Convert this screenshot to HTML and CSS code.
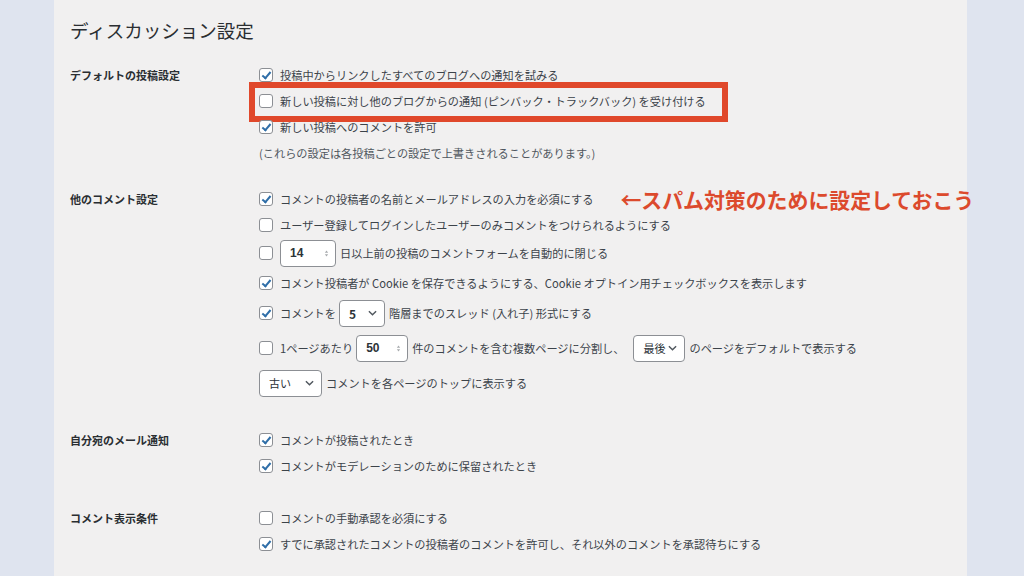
FILE: index.html
```html
<!DOCTYPE html>
<html lang="ja">
<head>
<meta charset="utf-8">
<title>ディスカッション設定</title>
<link rel="stylesheet" href="styles.css">
</head>
<body>
<div class="page">
  <h1 class="title">ディスカッション設定</h1>

  <div class="section s1">
    <div class="label">デフォルトの投稿設定</div>
    <div class="field">
      <div class="line"><span class="cb on"></span><span>投稿中からリンクしたすべてのブログへの通知を試みる</span></div>
      <div class="line highlight"><span class="cb"></span><span>新しい投稿に対し他のブログからの通知 (ピンバック・トラックバック) を受け付ける</span></div>
      <div class="line"><span class="cb on"></span><span>新しい投稿へのコメントを許可</span></div>
      <div class="line note">(これらの設定は各投稿ごとの設定で上書きされることがあります。)</div>
    </div>
  </div>

  <div class="section s2">
    <div class="label">他のコメント設定</div>
    <div class="field">
      <div class="line"><span class="cb on"></span><span>コメントの投稿者の名前とメールアドレスの入力を必須にする</span><span class="annot">←スパム対策のために設定しておこう</span></div>
      <div class="line"><span class="cb"></span><span>ユーザー登録してログインしたユーザーのみコメントをつけられるようにする</span></div>
      <div class="line h30"><span class="cb"></span><span class="num w56 tight">14<svg class="spin" viewBox="0 0 6 10"><path d="M1 4 L3 1.5 L5 4 Z M1 6 L3 8.5 L5 6 Z"/></svg></span><span>日以上前の投稿のコメントフォームを自動的に閉じる</span></div>
      <div class="line h30"><span class="cb on"></span><span>コメント投稿者が Cookie を保存できるようにする、Cookie オプトイン用チェックボックスを表示します</span></div>
      <div class="line h30"><span class="cb on"></span><span>コメントを</span><span class="sel w46">5<svg class="chev" viewBox="0 0 10 6"><polyline points="1,1 5,5 9,1"/></svg></span><span>階層までのスレッド (入れ子) 形式にする</span></div>
      <div class="line h40"><span class="cb"></span><span>1ページあたり</span><span class="num w52">50<svg class="spin" viewBox="0 0 6 10"><path d="M1 4 L3 1.5 L5 4 Z M1 6 L3 8.5 L5 6 Z"/></svg></span><span>件のコメントを含む複数ページに分割し、</span><span class="sel w52 gap-l">最後<svg class="chev" viewBox="0 0 10 6"><polyline points="1,1 5,5 9,1"/></svg></span><span>のページをデフォルトで表示する</span></div>
      <div class="line h30"><span class="sel w63 first">古い<svg class="chev" viewBox="0 0 10 6"><polyline points="1,1 5,5 9,1"/></svg></span><span>コメントを各ページのトップに表示する</span></div>
    </div>
  </div>

  <div class="section s3">
    <div class="label">自分宛のメール通知</div>
    <div class="field">
      <div class="line"><span class="cb on"></span><span>コメントが投稿されたとき</span></div>
      <div class="line"><span class="cb on"></span><span>コメントがモデレーションのために保留されたとき</span></div>
    </div>
  </div>

  <div class="section s4">
    <div class="label">コメント表示条件</div>
    <div class="field">
      <div class="line"><span class="cb"></span><span>コメントの手動承認を必須にする</span></div>
      <div class="line"><span class="cb on"></span><span>すでに承認されたコメントの投稿者のコメントを許可し、それ以外のコメントを承認待ちにする</span></div>
    </div>
  </div>
</div>
</body>
</html>
```

FILE: styles.css
```css
html, body {
  margin: 0;
  padding: 0;
}

body {
  background: #dfe4ef;
  font-family: "Noto Sans CJK JP", "Noto Sans", sans-serif;
  color: #3c434a;
  font-size: 11.2px;
  overflow: hidden;
}

.page {
  margin-left: 54px;
  width: 913px;
  height: 576px;
  background: #f1f0f0;
  padding: 19px 0 0 16px;
  box-sizing: border-box;
}

.title {
  margin: 0;
  font-size: 18.5px;
  line-height: 22px;
  font-weight: 400;
  color: #2a2e32;
}

.section {
  display: grid;
  grid-template-columns: 189px 1fr;
}

.s1 { margin-top: 21px; }
.s2 { margin-top: 20px; }
.s3 { margin-top: 29px; }
.s4 { margin-top: 26px; }

.label {
  height: 26px;
  display: flex;
  align-items: center;
  font-weight: 700;
  font-size: 11px;
  color: #2a2e32;
}

.field {
  display: flex;
  flex-direction: column;
}

.line {
  position: relative;
  height: 26px;
  display: flex;
  align-items: center;
  white-space: nowrap;
}

.line.h30 { height: 30px; }
.line.h40 { height: 40px; }

.cb {
  width: 14px;
  height: 14px;
  box-sizing: border-box;
  border: 1px solid #8c8f94;
  border-radius: 3px;
  background: #fff;
  margin-right: 7px;
  flex: none;
  position: relative;
}

.cb.on::after {
  content: "";
  position: absolute;
  left: 4px;
  top: 1px;
  width: 3px;
  height: 7px;
  border-right: 2px solid #2f6ea8;
  border-bottom: 2px solid #2f6ea8;
  transform: rotate(40deg);
}

.highlight::before {
  content: "";
  position: absolute;
  left: -10px;
  top: -6px;
  width: 479px;
  height: 40px;
  box-sizing: border-box;
  border: 6px solid #e0482b;
  pointer-events: none;
}

.annot {
  margin-left: 27px;
  font-size: 20.9px;
  font-weight: 700;
  color: #dc4a2d;
}

.num, .sel {
  height: 27px;
  box-sizing: border-box;
  border: 1px solid #8c8f94;
  border-radius: 4px;
  background: #fff;
  display: inline-flex;
  align-items: center;
  justify-content: space-between;
  padding: 0 6px 0 9px;
  margin: 0 4px 0 3px;
  font-size: 12px;
  font-weight: 700;
  color: #2c3338;
  flex: none;
}

.num { font-family: "Liberation Sans", "Noto Sans", sans-serif; }
.num.tight { margin-left: 0; }

.sel { padding-right: 7px; }
.sel.first { margin-left: 0; font-weight: 400; font-size: 11px; }
.sel.gap-l { margin-left: 9px; font-weight: 400; font-size: 11px; }

.w46 { width: 46px; }
.w52 { width: 52px; }
.w56 { width: 56px; }
.w63 { width: 63px; }

.spin {
  width: 5px;
  height: 9px;
  fill: #a7aaad;
}

.chev {
  width: 9px;
  height: 6px;
  fill: none;
  stroke: #50575e;
  stroke-width: 1.6;
}

.note {
  color: #50575e;
}
```
